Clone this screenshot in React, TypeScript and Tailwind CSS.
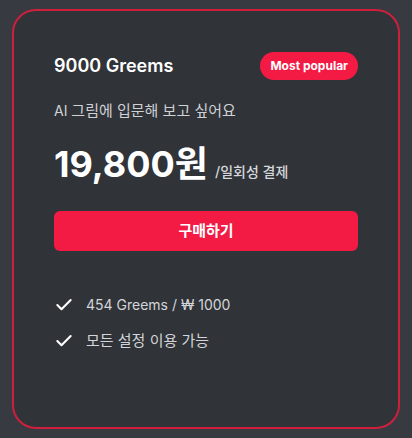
import { Check } from "lucide-react";

const features = [
  { text: "454 Greems / ₩ 1000", ko: false },
  { text: "모든 설정 이용 가능", ko: true },
];

const PricingCard = () => {
  return (
    <div className="flex h-[420px] w-[388px] flex-col rounded-3xl border-2 border-[#cf1f3d] bg-[#303338] p-10">
      <div className="flex items-center justify-between pt-px">
        <h3 className="text-lg font-semibold text-white">9000 Greems</h3>
        <span className="rounded-full bg-[#f31a44] px-[10px] py-1.5 text-xs leading-4 font-bold text-white">
          Most popular
        </span>
      </div>
      <p className="mt-[21px] text-sm leading-5 text-[#cfd1d5]">
        AI <span className="text-[15px]">그림에 입문해 보고 싶어요</span>
      </p>
      <div className="mt-[25px] flex items-baseline">
        <span className="text-4xl leading-none font-bold text-white">19,800원</span>
        <span className="ml-[7px] text-sm font-medium text-[#d5d7db]">/일회성 결제</span>
      </div>
      <button className="mt-[29px] h-10 w-full rounded-md bg-[#f31a44] text-[15px] font-bold text-white">
        구매하기
      </button>
      <ul className="mt-[44px] flex flex-col gap-4">
        {features.map((f) => (
          <li
            key={f.text}
            className={`flex h-5 items-center gap-3 leading-5 text-[#d3d5d9] ${f.ko ? "text-[15px]" : "text-sm"}`}
          >
            <Check size={20} strokeWidth={2.5} className="shrink-0 text-white" />
            {f.text}
          </li>
        ))}
      </ul>
    </div>
  );
};

export default function App() {
  return (
    <div
      className="min-h-[438px] bg-[#373a40] pt-[9px] pl-3"
      style={{ fontFamily: "Inter, 'Noto Sans CJK KR', sans-serif" }}
    >
      <PricingCard />
    </div>
  );
}
